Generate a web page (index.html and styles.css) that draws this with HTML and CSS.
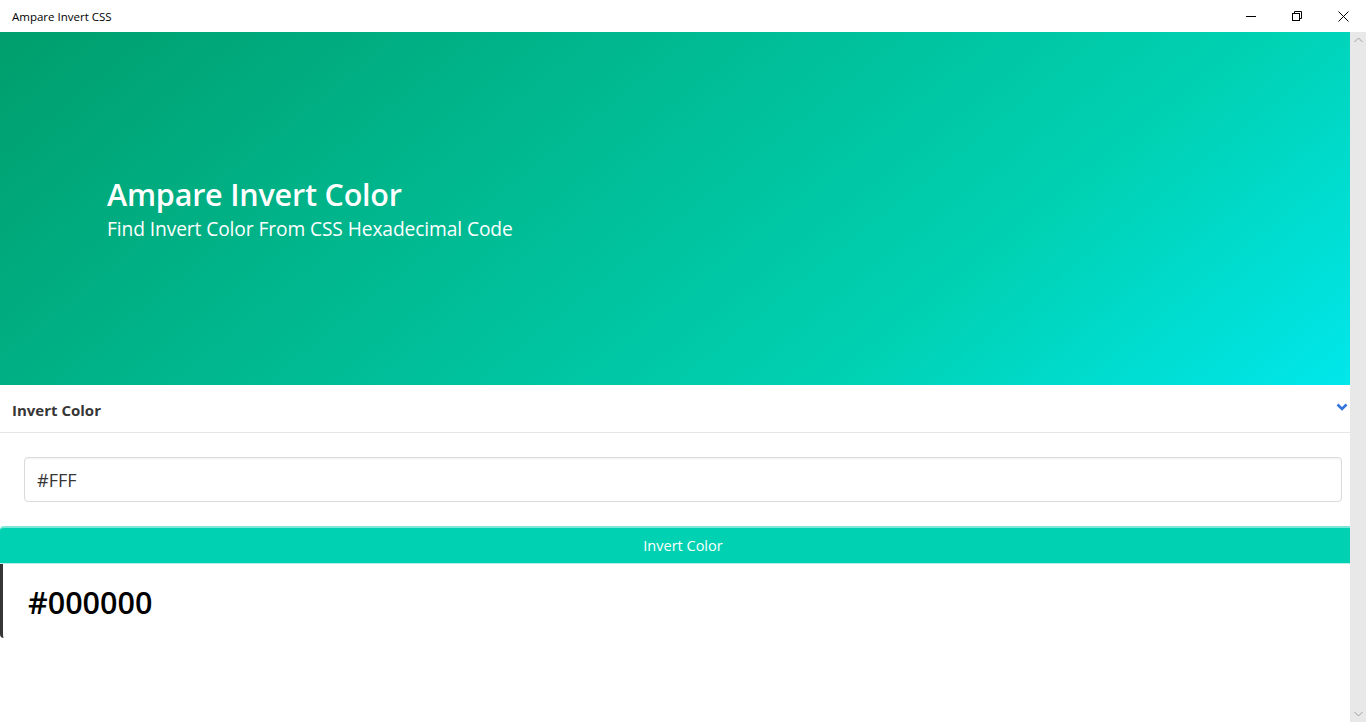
FILE: index.html
```html
<!DOCTYPE html>
<html lang="en">
<head>
    <meta charset="UTF-8">
    <title>Ampare Invert CSS</title>
    <link rel="stylesheet" href="styles.css">
</head>
<body>

    <div class="titlebar">
        <span class="app-title">Ampare Invert CSS</span>
        <div class="win-controls">
            <span class="win-btn">
                <svg width="10" height="10" viewBox="0 0 10 10"><path d="M0 5.5h10" stroke="#000" stroke-width="1"/></svg>
            </span>
            <span class="win-btn">
                <svg width="10" height="10" viewBox="0 0 10 10" fill="none" stroke="#000" stroke-width="1"><rect x="0.5" y="2.5" width="7" height="7"/><path d="M2.5 2.5v-2h7v7h-2"/></svg>
            </span>
            <span class="win-btn">
                <svg width="11" height="11" viewBox="0 0 11 11" stroke="#000" stroke-width="1"><path d="M0.5 0.5l10 10M10.5 0.5l-10 10"/></svg>
            </span>
        </div>
    </div>

    <div class="window">
        <div class="content">
            <section class="hero">
                <div class="hero-body">
                    <h1 class="title">Ampare Invert Color</h1>
                    <h2 class="subtitle">Find Invert Color From CSS Hexadecimal Code</h2>
                </div>
            </section>

            <div class="card-header">
                <p class="card-title">Invert Color</p>
                <svg class="chevron" width="12" height="8" viewBox="0 0 12 8"><path d="M1.5 1.5l4.5 4.5 4.5-4.5" fill="none" stroke="#3273dc" stroke-width="2.6"/></svg>
            </div>

            <div class="card-body">
                <input class="input" type="text" value="#FFF">
            </div>

            <button class="invert-btn">Invert Color</button>

            <div class="result">#000000</div>
        </div>

        <div class="scrollbar">
            <svg width="9" height="6" viewBox="0 0 9 6"><path d="M0.5 5l4-4 4 4" fill="none" stroke="#a0a0a0" stroke-width="1"/></svg>
            <svg width="9" height="6" viewBox="0 0 9 6"><path d="M0.5 1l4 4 4-4" fill="none" stroke="#a0a0a0" stroke-width="1"/></svg>
        </div>
    </div>

</body>
</html>
```

FILE: styles.css
```css
body {
    margin: 0;
    font-family: 'Open Sans', 'Noto Sans', sans-serif;
    background: white;
    overflow: hidden;
}

.titlebar {
    height: 32px;
    display: flex;
    align-items: center;
    justify-content: space-between;
    background: white;
}

.app-title {
    font-size: 11.5px;
    color: #000;
    padding-left: 12px;
}

.win-controls {
    display: flex;
    height: 100%;
}

.win-btn {
    width: 46px;
    display: flex;
    align-items: center;
    justify-content: center;
}

.window {
    display: flex;
    height: 690px;
}

.content {
    flex: 1;
    overflow: hidden;
}

.scrollbar {
    width: 16px;
    background: #e8e8e8;
    display: flex;
    flex-direction: column;
    justify-content: space-between;
    align-items: center;
    padding: 5px 0;
}

.hero {
    height: 353px;
    background: linear-gradient(141deg, #009e6c 0%, #00d1b2 71%, #00e7eb 100%);
    display: flex;
    align-items: center;
}

.hero-body {
    padding: 0 107px;
    margin-top: 0;
}

.title {
    color: white;
    font-size: 30.5px;
    font-weight: 600;
    margin: 0;
    line-height: 1.2;
    letter-spacing: -0.2px;
}

.subtitle {
    color: white;
    font-size: 19.2px;
    font-weight: 400;
    margin: 5px 0 0;
    line-height: 1.25;
    letter-spacing: -0.1px;
}

.card-header {
    height: 48px;
    display: flex;
    align-items: center;
    justify-content: space-between;
    border-bottom: 1px solid #e6e6e6;
    box-sizing: border-box;
    padding: 3px 2px 0 12px;
}

.card-title {
    margin: 0;
    font-size: 15px;
    font-weight: 700;
    color: #363636;
}

.chevron {
    margin-top: -6px;
}

.card-body {
    padding: 24px 8px 24px 24px;
}

.input {
    display: block;
    width: 100%;
    height: 45px;
    box-sizing: border-box;
    border: 1px solid #dbdbdb;
    border-radius: 4px;
    padding: 0 12px;
    font-family: inherit;
    font-size: 18px;
    color: #363636;
    box-shadow: inset 0 1px 2px rgba(10, 10, 10, 0.06);
}

.invert-btn {
    display: block;
    width: 100%;
    height: 38px;
    background: #00d1b2;
    border: none;
    border-top: 2px solid #7ee6d6;
    border-bottom: 1px solid #b3efe6;
    color: white;
    font-family: inherit;
    font-size: 14.5px;
    padding: 0 0 0 16px;
    border-radius: 4px 0 0 0;
}

.result {
    height: 74px;
    border-left: 3px solid #363636;
    border-radius: 0 0 0 4px;
    box-sizing: border-box;
    padding: 17px 0 0 25px;
    font-size: 30.5px;
    font-weight: 600;
    color: #000;
}
```
